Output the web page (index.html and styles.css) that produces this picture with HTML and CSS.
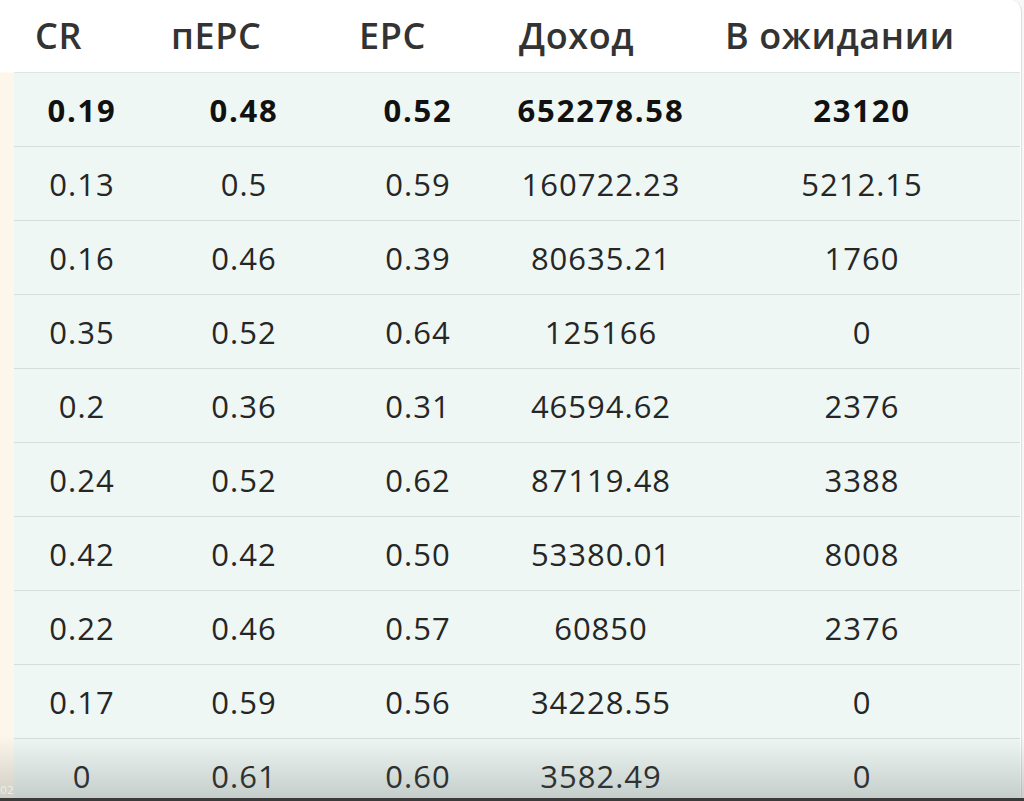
FILE: index.html
```html
<!DOCTYPE html>
<html lang="ru">
<head>
<meta charset="utf-8">
<link rel="stylesheet" href="styles.css">
</head>
<body>
<div class="frame">
  <div class="strip"></div>
  <div class="card">
    <table class="stats">
      <colgroup>
        <col class="c1"><col class="c2"><col class="c3"><col class="c4"><col class="c5">
      </colgroup>
      <thead>
        <tr><th>CR</th><th>пЕРС</th><th>ЕРС</th><th>Доход</th><th>В ожидании</th></tr>
      </thead>
      <tbody>
        <tr class="total"><td>0.19</td><td>0.48</td><td>0.52</td><td>652278.58</td><td>23120</td></tr>
        <tr><td>0.13</td><td>0.5</td><td>0.59</td><td>160722.23</td><td>5212.15</td></tr>
        <tr><td>0.16</td><td>0.46</td><td>0.39</td><td>80635.21</td><td>1760</td></tr>
        <tr><td>0.35</td><td>0.52</td><td>0.64</td><td>125166</td><td>0</td></tr>
        <tr><td>0.2</td><td>0.36</td><td>0.31</td><td>46594.62</td><td>2376</td></tr>
        <tr><td>0.24</td><td>0.52</td><td>0.62</td><td>87119.48</td><td>3388</td></tr>
        <tr><td>0.42</td><td>0.42</td><td>0.50</td><td>53380.01</td><td>8008</td></tr>
        <tr><td>0.22</td><td>0.46</td><td>0.57</td><td>60850</td><td>2376</td></tr>
        <tr><td>0.17</td><td>0.59</td><td>0.56</td><td>34228.55</td><td>0</td></tr>
        <tr><td>0</td><td>0.61</td><td>0.60</td><td>3582.49</td><td>0</td></tr>
      </tbody>
    </table>
  </div>
  <div class="shade"></div>
  <div class="stamp">02</div>
</div>
</body>
</html>
```
FILE: styles.css
```css
html, body {
  margin: 0;
  padding: 0;
  background: #f7f8f8;
}
.frame {
  position: relative;
  width: 1024px;
  height: 801px;
  overflow: hidden;
  display: flex;
  background: #f6f7f7;
}
.strip {
  width: 14px;
  flex: none;
  background: linear-gradient(#ffffff 0 72px, #fdf6ea 73px);
}
.card {
  width: 1007px;
  flex: none;
  background: #ffffff;
  border-right: 1px solid #d9dedd;
  border-top-right-radius: 12px;
  overflow: hidden;
}
.stats {
  border-collapse: collapse;
  table-layout: fixed;
  width: 1006px;
  font-family: "Open Sans", "DejaVu Sans", sans-serif;
}
.c1 { width: 136px; }
.c2 { width: 188px; }
.c3 { width: 160px; }
.c4 { width: 206px; }
.c5 { width: 316px; }
.stats th {
  height: 70px;
  padding: 0 0 2px 21px;
  text-align: left;
  font-size: 36px;
  font-weight: 600;
  letter-spacing: 0.6px;
  color: #333333;
  border-bottom: 1px solid #dfe5e4;
  background: #ffffff;
  white-space: nowrap;
}
.stats td {
  height: 73px;
  padding: 0;
  text-align: center;
  font-size: 31px;
  font-weight: 400;
  letter-spacing: 1px;
  color: #262626;
  background: #eef7f3;
  border-bottom: 1px solid #d6dedd;
}
.stats tr.total td {
  font-weight: 700;
  letter-spacing: 1.8px;
  color: #111111;
}
.shade {
  position: absolute;
  left: 0;
  right: 0;
  bottom: 0;
  height: 62px;
  background: linear-gradient(rgba(90, 100, 100, 0), rgba(90, 100, 100, 0.28));
  border-bottom: 3px solid #3a3a3a;
  pointer-events: none;
}
.stamp {
  position: absolute;
  left: 0;
  bottom: 4px;
  font-family: "DejaVu Sans", sans-serif;
  font-size: 11px;
  color: rgba(255, 255, 255, 0.6);
}
```
